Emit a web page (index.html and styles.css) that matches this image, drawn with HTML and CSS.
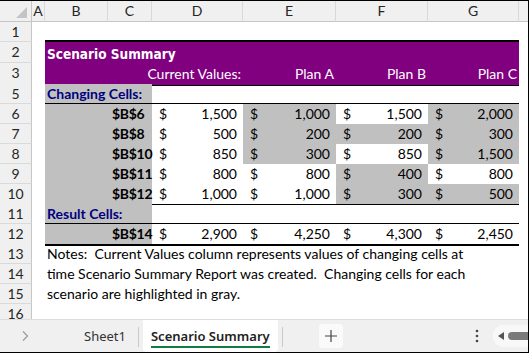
FILE: index.html
```html
<!DOCTYPE html>
<html lang="en">
<head>
    <meta charset="UTF-8">
    <title>Scenario Summary</title>
    <link rel="stylesheet" href="styles.css">
</head>
<body>
    <div class="window">
        <div class="sheet">
            <div class="row head">
                <div class="corner"><span class="tri"></span></div>
                <div class="col">A</div>
                <div class="col">B</div>
                <div class="col">C</div>
                <div class="col">D</div>
                <div class="col">E</div>
                <div class="col">F</div>
                <div class="col">G</div>
                <div class="col last"></div>
            </div>

            <div class="row r1">
                <div class="rh">1</div>
                <div class="cell"></div>
                <div class="cell top-rule wide"></div>
                <div class="cell"></div>
            </div>

            <div class="row r2">
                <div class="rh">2</div>
                <div class="cell"></div>
                <div class="cell purple title wide">Scenario Summary</div>
                <div class="cell"></div>
            </div>

            <div class="row r3">
                <div class="rh">3</div>
                <div class="cell"></div>
                <div class="cell purple rule"></div>
                <div class="cell purple rule"></div>
                <div class="cell purple rule colhead">Current Values:</div>
                <div class="cell purple rule colhead">Plan A</div>
                <div class="cell purple rule colhead">Plan B</div>
                <div class="cell purple rule colhead">Plan C</div>
                <div class="cell"></div>
            </div>

            <div class="row">
                <div class="rh">5</div>
                <div class="cell"></div>
                <div class="cell gray rule section span2">Changing Cells:</div>
                <div class="cell rule"></div>
                <div class="cell rule"></div>
                <div class="cell rule"></div>
                <div class="cell rule"></div>
                <div class="cell"></div>
            </div>

            <div class="row">
                <div class="rh">6</div>
                <div class="cell"></div>
                <div class="cell gray"></div>
                <div class="cell gray key">$B$6</div>
                <div class="cell money"><span>$</span><span>1,500</span></div>
                <div class="cell money gray"><span>$</span><span>1,000</span></div>
                <div class="cell money"><span>$</span><span>1,500</span></div>
                <div class="cell money gray"><span>$</span><span>2,000</span></div>
                <div class="cell"></div>
            </div>

            <div class="row">
                <div class="rh">7</div>
                <div class="cell"></div>
                <div class="cell gray"></div>
                <div class="cell gray key">$B$8</div>
                <div class="cell money"><span>$</span><span>500</span></div>
                <div class="cell money gray"><span>$</span><span>200</span></div>
                <div class="cell money gray"><span>$</span><span>200</span></div>
                <div class="cell money gray"><span>$</span><span>300</span></div>
                <div class="cell"></div>
            </div>

            <div class="row">
                <div class="rh">8</div>
                <div class="cell"></div>
                <div class="cell gray"></div>
                <div class="cell gray key">$B$10</div>
                <div class="cell money"><span>$</span><span>850</span></div>
                <div class="cell money gray"><span>$</span><span>300</span></div>
                <div class="cell money"><span>$</span><span>850</span></div>
                <div class="cell money gray"><span>$</span><span>1,500</span></div>
                <div class="cell"></div>
            </div>

            <div class="row">
                <div class="rh">9</div>
                <div class="cell"></div>
                <div class="cell gray"></div>
                <div class="cell gray key">$B$11</div>
                <div class="cell money"><span>$</span><span>800</span></div>
                <div class="cell money"><span>$</span><span>800</span></div>
                <div class="cell money gray"><span>$</span><span>400</span></div>
                <div class="cell money"><span>$</span><span>800</span></div>
                <div class="cell"></div>
            </div>

            <div class="row">
                <div class="rh">10</div>
                <div class="cell"></div>
                <div class="cell gray rule"></div>
                <div class="cell gray rule key">$B$12</div>
                <div class="cell money rule"><span>$</span><span>1,000</span></div>
                <div class="cell money rule"><span>$</span><span>1,000</span></div>
                <div class="cell money gray rule"><span>$</span><span>300</span></div>
                <div class="cell money gray rule"><span>$</span><span>500</span></div>
                <div class="cell"></div>
            </div>

            <div class="row">
                <div class="rh">11</div>
                <div class="cell"></div>
                <div class="cell gray rule section span2">Result Cells:</div>
                <div class="cell rule"></div>
                <div class="cell rule"></div>
                <div class="cell rule"></div>
                <div class="cell rule"></div>
                <div class="cell"></div>
            </div>

            <div class="row">
                <div class="rh">12</div>
                <div class="cell"></div>
                <div class="cell gray end"></div>
                <div class="cell gray end key">$B$14</div>
                <div class="cell money end"><span>$</span><span>2,900</span></div>
                <div class="cell money end"><span>$</span><span>4,250</span></div>
                <div class="cell money end"><span>$</span><span>4,300</span></div>
                <div class="cell money end"><span>$</span><span>2,450</span></div>
                <div class="cell"></div>
            </div>

            <div class="row">
                <div class="rh">13</div>
                <div class="cell"></div>
                <div class="cell note">Notes:&nbsp; Current Values column represents values of changing cells at</div>
            </div>
            <div class="row">
                <div class="rh">14</div>
                <div class="cell"></div>
                <div class="cell note">time Scenario Summary Report was created.&nbsp; Changing cells for each</div>
            </div>
            <div class="row">
                <div class="rh">15</div>
                <div class="cell"></div>
                <div class="cell note">scenario are highlighted in gray.</div>
            </div>
            <div class="row">
                <div class="rh">16</div>
                <div class="cell"></div>
            </div>
        </div>

        <div class="tabs">
            <div class="nav">
                <svg width="8" height="12" viewBox="0 0 8 12"><path d="M2 1.5 L6.5 6 L2 10.5" fill="none" stroke="#9a9a9a" stroke-width="1.2"/></svg>
            </div>
            <div class="tab">Sheet1</div>
            <div class="sep"></div>
            <div class="tab active"><span>Scenario Summary</span></div>
            <div class="sep"></div>
            <div class="add">
                <svg width="14" height="14" viewBox="0 0 14 14"><path d="M7 1 V13 M1 7 H13" stroke="#444" stroke-width="1.2"/></svg>
            </div>
            <div class="more">
                <svg width="4" height="14" viewBox="0 0 4 14"><circle cx="2" cy="2" r="1.3" fill="#444"/><circle cx="2" cy="7" r="1.3" fill="#444"/><circle cx="2" cy="12" r="1.3" fill="#444"/></svg>
            </div>
            <div class="scroll">
                <svg width="6" height="8" viewBox="0 0 6 8"><path d="M6 0 L0 4 L6 8 Z" fill="#555"/></svg>
                <div class="thumb"></div>
            </div>
        </div>
    </div>
</body>
</html>
```

FILE: styles.css
```css
body {
    margin: 0;
    padding: 0;
    background-color: #ffffff;
    font-family: 'Lato', 'Open Sans', sans-serif;
    color: #000000;
}

.window {
    width: 529px;
    height: 353px;
    box-sizing: border-box;
    border: 1px solid #000;
    border-left: none;
    display: flex;
    flex-direction: column;
    overflow: hidden;
}

.sheet {
    height: 318px;
    overflow: hidden;
    font-size: 14px;
}

.row {
    display: grid;
    grid-template-columns: 32px 13px 63px 44px 91px 93px 92px 91px 1fr;
    height: 20px;
}

.row.head { height: 21px; }
.row.r2, .row.r3 { height: 21px; }

.row > div {
    box-sizing: border-box;
    line-height: 20px;
    white-space: nowrap;
    overflow: hidden;
}

/* headers */
.corner, .col, .rh {
    background-color: #f0f0f0;
    color: #262626;
    text-align: center;
}

.corner {
    border-right: 1px solid #c6c6c6;
    border-bottom: 1px solid #c6c6c6;
    position: relative;
}

.tri {
    position: absolute;
    right: 4px;
    bottom: 3px;
    width: 0;
    height: 0;
    border-left: 11px solid transparent;
    border-bottom: 11px solid #c4c4c4;
}

.col {
    border-right: 1px solid #d9d9d9;
    border-bottom: 1px solid #c6c6c6;
}

.col.last { border-right: none; }

.rh {
    border-right: 1px solid #c6c6c6;
    border-bottom: 1px solid #dadada;
}

/* table body */
.wide { grid-column: 3 / 9; }
.span2 { grid-column: span 2; }

.top-rule { border-bottom: 2px solid #000; }

.purple {
    background-color: #800080;
    color: #ffffff;
}

.row > .title {
    font-family: 'DejaVu Sans Condensed', 'DejaVu Sans', sans-serif;
    font-weight: bold;
    font-size: 13.5px;
    padding-left: 2px;
    line-height: 24px;
}

.row > .colhead {
    display: flex;
    justify-content: flex-end;
    padding-right: 2px;
    line-height: 22px;
    overflow: visible;
}

.rule { border-bottom: 1px solid #000; }
.end { border-bottom: 2px solid #000; }

.gray { background-color: #c0c0c0; }

.section {
    color: #000080;
    font-weight: bold;
    padding-left: 2px;
}

.row > .key {
    font-weight: bold;
    padding-left: 4px;
    letter-spacing: -0.3px;
    overflow: visible;
}

.money {
    display: flex;
    justify-content: space-between;
    padding: 0 6px 0 7px;
}

.note {
    grid-column: 3 / 10;
    padding-left: 2px;
}

/* sheet tabs */
.tabs {
    flex: 1;
    display: flex;
    align-items: stretch;
    background-color: #f0f0f0;
    border-top: 1px solid #dcdcdc;
    font-family: 'Noto Sans', 'Open Sans', sans-serif;
    font-size: 13px;
    color: #333;
}

.nav {
    width: 50px;
    display: flex;
    align-items: center;
    justify-content: center;
}

.tab {
    display: flex;
    align-items: center;
    padding: 0 12px 0 34px;
}

.sep {
    width: 1px;
    background-color: #c8c8c8;
    margin: 7px 0 5px;
}

.tab.active {
    background-color: #ffffff;
    padding: 0 8px;
    margin: 0 4px;
    border-radius: 0 0 4px 4px;
    font-weight: 600;
    color: #222;
}

.tab.active span {
    border-bottom: 2px solid #107c41;
    padding: 2px 0 1px;
}

.add {
    margin: 4px 0 4px 36px;
    width: 24px;
    display: flex;
    align-items: center;
    justify-content: center;
    background-color: #fafafa;
    border-radius: 4px;
}

.more {
    margin-left: 132px;
    display: flex;
    align-items: center;
}

.scroll {
    margin: 5px 0 5px 14px;
    flex: 1;
    display: flex;
    align-items: center;
    gap: 4px;
    padding-left: 5px;
    background-color: #f8f8f8;
    border-radius: 10px 0 0 10px;
}

.thumb {
    flex: 1;
    height: 8px;
    background-color: #7a7a7a;
    border-radius: 4px 0 0 4px;
}
```
